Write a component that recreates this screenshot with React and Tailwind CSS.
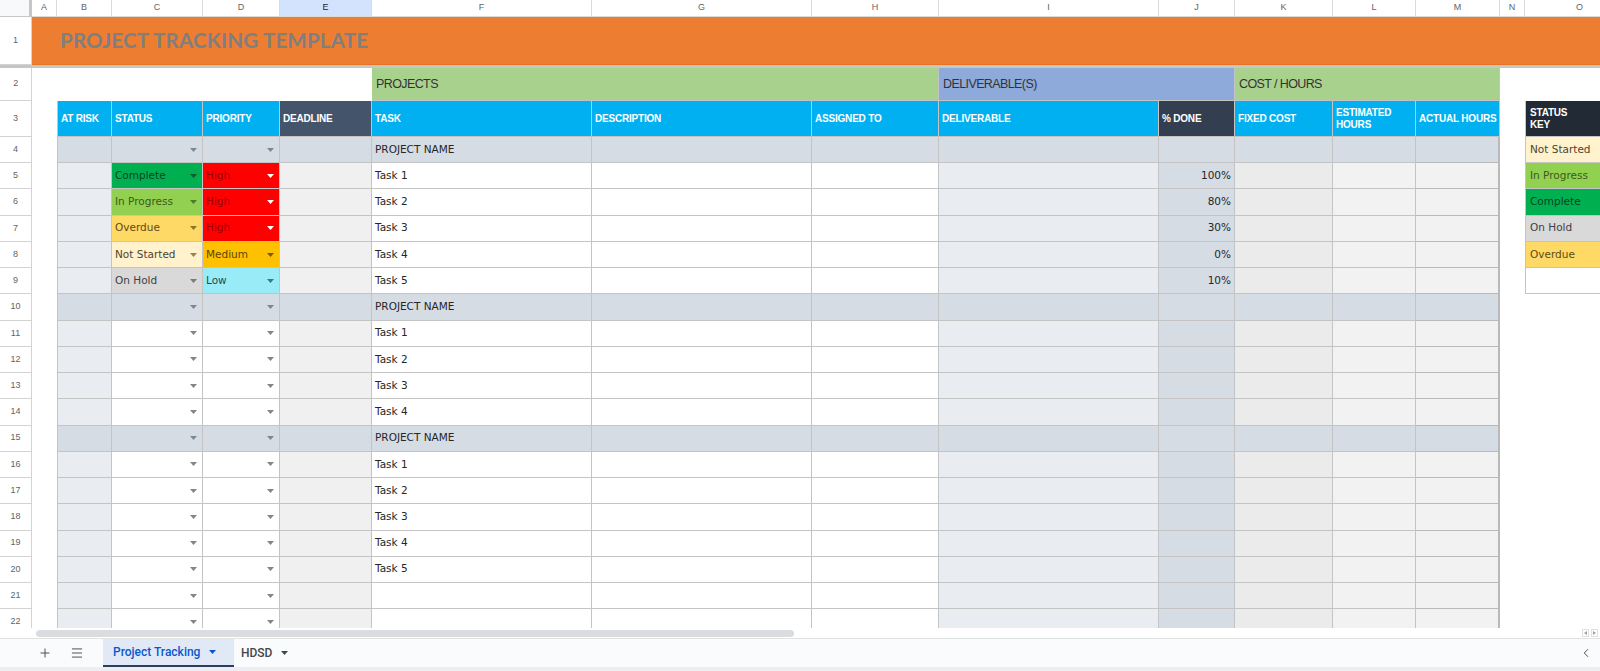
import { Plus, Menu, ChevronLeft } from "lucide-react";

const GRID =
  "grid grid-cols-[32px_25px_55px_91px_77px_92px_220px_220px_127px_220px_76px_98px_83px_84px_25px_110px]";

const LETTERS = ["A", "B", "C", "D", "E", "F", "G", "H", "I", "J", "K", "L", "M", "N", "O"];

const DATA = "font-['DejaVu_Sans',sans-serif] text-[10.5px]";
const HEAD = "font-['Liberation_Sans',sans-serif] font-bold text-[10px] text-white tracking-[-0.2px]";
const LINE = "border-r border-b border-[#c4c4c4]";
const PROJ = "bg-[#d6dce4]";

const STATUS = {
  Complete: { bg: "bg-[#00b050]", text: "text-[#0b4321]", arrow: "text-[#0e5a2c]" },
  "In Progress": { bg: "bg-[#92d050]", text: "text-[#3a5a20]", arrow: "text-[#52782c]" },
  Overdue: { bg: "bg-[#ffd966]", text: "text-[#5e4b14]", arrow: "text-[#8d7427]" },
  "Not Started": { bg: "bg-[#fff2cc]", text: "text-[#4d4530]", arrow: "text-[#9a8550]" },
  "On Hold": { bg: "bg-[#d9d9d9]", text: "text-[#404040]", arrow: "text-[#7a7a7a]" },
};

const PRIORITY = {
  High: { bg: "bg-[#ff0000]", text: "text-[#9c0006]", arrow: "text-white" },
  Medium: { bg: "bg-[#ffc000]", text: "text-[#5c4500]", arrow: "text-[#7a5c00]" },
  Low: { bg: "bg-[#99ecf7]", text: "text-[#1d4c55]", arrow: "text-[#2b7e8c]" },
};

const KEY = {
  4: "Not Started",
  5: "In Progress",
  6: "Complete",
  7: "On Hold",
  8: "Overdue",
};

const rows = [
  { n: 4, project: true },
  { n: 5, task: "Task 1", status: "Complete", priority: "High", done: "100%" },
  { n: 6, task: "Task 2", status: "In Progress", priority: "High", done: "80%" },
  { n: 7, task: "Task 3", status: "Overdue", priority: "High", done: "30%" },
  { n: 8, task: "Task 4", status: "Not Started", priority: "Medium", done: "0%" },
  { n: 9, task: "Task 5", status: "On Hold", priority: "Low", done: "10%" },
  { n: 10, project: true },
  { n: 11, task: "Task 1" },
  { n: 12, task: "Task 2" },
  { n: 13, task: "Task 3" },
  { n: 14, task: "Task 4" },
  { n: 15, project: true },
  { n: 16, task: "Task 1" },
  { n: 17, task: "Task 2" },
  { n: 18, task: "Task 3" },
  { n: 19, task: "Task 4" },
  { n: 20, task: "Task 5" },
  { n: 21 },
  { n: 22 },
];

const Caret = ({ className, w = 7, h = 4 }) => (
  <svg width={w} height={h} viewBox="0 0 7 4" className={className}>
    <path d="M0 0h7L3.5 4z" fill="currentColor" />
  </svg>
);

const RowNum = ({ n }) => (
  <div className="flex items-center justify-center bg-white border-r border-b border-[#d3d3d3] font-['Liberation_Sans',sans-serif] text-[9px] text-[#5f6368]">
    {n}
  </div>
);

const Drop = ({ label, style, project }) => {
  const bg = project ? PROJ : style ? style.bg : "bg-white";
  const arrow = project ? "text-[#7d8796]" : style ? style.arrow : "text-[#858585]";
  return (
    <div className={`flex items-center justify-between pl-[3px] pr-[5px] ${LINE} ${bg} ${style ? style.text : ""}`}>
      <span className="whitespace-nowrap">{label}</span>
      <Caret className={arrow} />
    </div>
  );
};

const BodyRow = ({ row }) => {
  const p = row.project;
  const key = KEY[row.n];
  return (
    <div className={`${GRID} h-[26.24px] ${DATA} text-[#262626]`}>
      <RowNum n={row.n} />
      <div className="bg-white" />
      <div className={`border-l ${LINE} ${p ? PROJ : "bg-[#e9ecf0]"}`} />
      <Drop project={p} label={row.status} style={STATUS[row.status]} />
      <Drop project={p} label={row.priority} style={PRIORITY[row.priority]} />
      <div className={`${LINE} ${p ? PROJ : "bg-[#f0f0f0]"}`} />
      <div className={`flex items-center pl-[3px] ${LINE} ${p ? PROJ : "bg-white"}`}>
        {p ? "PROJECT NAME" : row.task}
      </div>
      <div className={`${LINE} ${p ? PROJ : "bg-white"}`} />
      <div className={`${LINE} ${p ? PROJ : "bg-white"}`} />
      <div className={`${LINE} ${p ? PROJ : "bg-[#e9ecf1]"}`} />
      <div className={`flex items-center justify-end pr-[3px] ${LINE} bg-[#d6dce4]`}>{row.done}</div>
      <div className={`${LINE} ${p ? PROJ : "bg-[#ebebeb]"}`} />
      <div className={`${LINE} ${p ? PROJ : "bg-[#f2f2f2]"}`} />
      <div className={`border-r-2 border-b border-[#b9b9b9] ${p ? PROJ : "bg-[#f2f2f2]"}`} />
      <div className="bg-white" />
      {key ? (
        <div className={`flex items-center pl-[4px] border-l border-b border-[#c4c4c4] ${STATUS[key].bg} ${STATUS[key].text}`}>
          {key}
        </div>
      ) : row.n === 9 ? (
        <div className="border-l border-b border-[#c4c4c4] bg-white" />
      ) : (
        <div className="bg-white" />
      )}
    </div>
  );
};

const headers = [
  { label: "AT RISK", bg: "bg-[#00b0f0]" },
  { label: "STATUS", bg: "bg-[#00b0f0]" },
  { label: "PRIORITY", bg: "bg-[#00b0f0]" },
  { label: "DEADLINE", bg: "bg-[#44546a]" },
  { label: "TASK", bg: "bg-[#00b0f0]" },
  { label: "DESCRIPTION", bg: "bg-[#00b0f0]" },
  { label: "ASSIGNED TO", bg: "bg-[#00b0f0]" },
  { label: "DELIVERABLE", bg: "bg-[#00b0f0]" },
  { label: "% DONE", bg: "bg-[#333f50]" },
  { label: "FIXED COST", bg: "bg-[#00b0f0]" },
  { label: "ESTIMATED HOURS", bg: "bg-[#00b0f0]", wrap: true },
  { label: "ACTUAL HOURS", bg: "bg-[#00b0f0]" },
];

export default function App() {
  return (
    <div className="w-[1600px] h-[671px] overflow-hidden bg-white flex flex-col">
      <div className="h-[628px] overflow-hidden">
        {/* column letters */}
        <div className={`${GRID} h-[17px]`}>
          <div className="bg-[#f8f9fa] border-r-[3px] border-b border-[#c4c7c5]" />
          {LETTERS.map((l) => (
            <div
              key={l}
              className={`flex items-center justify-center border-r border-b border-[#dadada] font-['Liberation_Sans',sans-serif] text-[9px] ${
                l === "E" ? "bg-[#d3e3fd] text-[#1f1f1f]" : "bg-white text-[#5f6368]"
              }`}
            >
              {l}
            </div>
          ))}
        </div>

        {/* title */}
        <div className={`${GRID} h-[48px]`}>
          <RowNum n={1} />
          <div className="col-span-15 flex items-center pl-[28px] bg-[#ed7d31] border-b border-[#e8731e] font-['Lato',sans-serif] font-bold text-[20.5px] tracking-[0.2px] text-[#7f7f7f]">
            PROJECT TRACKING TEMPLATE
          </div>
        </div>
        <div className="h-[3px] bg-[#c4c7c5]" />

        {/* section row */}
        <div className={`${GRID} h-[33px] font-['Liberation_Sans',sans-serif] text-[12.5px] tracking-[-0.6px] text-[#333333]`}>
          <RowNum n={2} />
          <div className="col-span-5 bg-white" />
          <div className={`col-span-3 flex items-center pl-[4px] bg-[#a9d18e] ${LINE}`}>PROJECTS</div>
          <div className={`col-span-2 flex items-center pl-[4px] bg-[#8eaadb] ${LINE}`}>DELIVERABLE(S)</div>
          <div className={`col-span-3 flex items-center pl-[4px] bg-[#a9d18e] ${LINE}`}>COST / HOURS</div>
          <div className="bg-white" />
          <div className="bg-white" />
        </div>

        {/* header row */}
        <div className={`${GRID} h-[36px]`}>
          <RowNum n={3} />
          <div className="bg-white" />
          {headers.map((h, i) => (
            <div
              key={h.label}
              className={`flex items-center pl-[3px] leading-[12px] ${HEAD} ${h.bg} ${LINE} ${i === 0 ? "border-l" : ""}`}
            >
              {h.wrap ? (
                <span>
                  ESTIMATED
                  <br />
                  HOURS
                </span>
              ) : (
                <span className="whitespace-nowrap">{h.label}</span>
              )}
            </div>
          ))}
          <div className="bg-white" />
          <div className={`flex items-center pl-[4px] leading-[12px] ${HEAD} bg-[#222a35] border-l border-b border-[#c4c4c4]`}>
            <span>
              STATUS
              <br />
              KEY
            </span>
          </div>
        </div>

        {rows.map((r) => (
          <BodyRow key={r.n} row={r} />
        ))}
      </div>

      {/* horizontal scrollbar */}
      <div className="h-[10px] flex items-center bg-white">
        <div className="ml-[36px] w-[758px] h-[7px] rounded-full bg-[#dadce0]" />
        <div className="ml-auto mr-[2px] flex gap-[2px] text-[#9aa0a6]">
          <div className="w-[7px] h-[8px] flex items-center justify-center border border-[#e0e0e0]">
            <svg width="3" height="4" viewBox="0 0 3 4">
              <path d="M3 0v4L0 2z" fill="currentColor" />
            </svg>
          </div>
          <div className="w-[7px] h-[8px] flex items-center justify-center border border-[#e0e0e0]">
            <svg width="3" height="4" viewBox="0 0 3 4">
              <path d="M0 0v4l3-2z" fill="currentColor" />
            </svg>
          </div>
        </div>
      </div>

      {/* sheet tabs */}
      <div className="h-[29px] flex items-stretch bg-[#f9fbfd] border-t border-[#e1e3e1] font-['Roboto',sans-serif] text-[12px]">
        <div className="ml-[30px] w-[30px] flex items-center justify-center text-[#444746]">
          <Plus size={14} strokeWidth={1.6} />
        </div>
        <div className="ml-[2px] w-[30px] flex items-center justify-center text-[#444746]">
          <Menu size={14} strokeWidth={1.6} />
        </div>
        <div className="ml-[11px] w-[131px] flex items-center gap-[9px] pl-[10px] bg-[#e1e9f7] border-b-2 border-[#2f3e5c] text-[#0b57d0] font-medium">
          <span>Project Tracking</span>
          <Caret className="text-[#0b57d0]" />
        </div>
        <div className="ml-[7px] flex items-center gap-[9px] text-[#444746] font-medium">
          <span>HDSD</span>
          <Caret className="text-[#444746]" />
        </div>
        <div className="ml-auto mr-[7px] flex items-center text-[#444746]">
          <ChevronLeft size={14} strokeWidth={1.6} />
        </div>
      </div>
      <div className="h-[4px] bg-[#eceef1]" />
    </div>
  );
}
